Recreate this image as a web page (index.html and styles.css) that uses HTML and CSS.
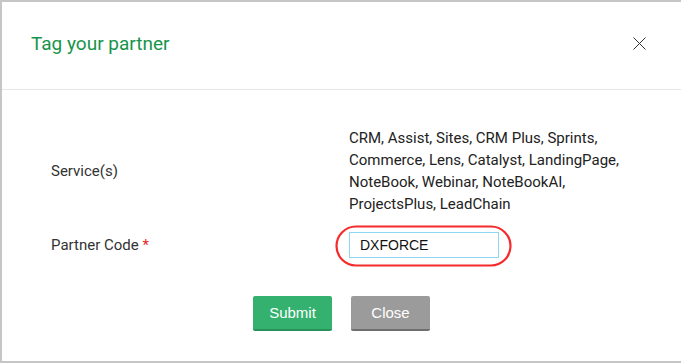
FILE: index.html
```html
<!DOCTYPE html>
<html lang="en">

<head>
    <meta charset="UTF-8">
    <meta name="viewport" content="width=device-width, initial-scale=1.0">
    <title>Tag your partner</title>
    <link rel="stylesheet" href="styles.css">
</head>

<body>
    <div class="dialog">
        <!-- header -->
        <div class="dialog-header">
            <h2>Tag your partner</h2>
            <span class="close-icon">
                <svg width="13" height="13" viewBox="0 0 13 13">
                    <path d="M0.5 0.5 L12.5 12.5 M12.5 0.5 L0.5 12.5" stroke="#333" stroke-width="1" fill="none"/>
                </svg>
            </span>
        </div>

        <div class="dialog-body">
            <!-- services -->
            <div class="form-row">
                <label>Service(s)</label>
                <div class="value">CRM, Assist, Sites, CRM Plus, Sprints,<br>Commerce, Lens, Catalyst, LandingPage,<br>NoteBook, Webinar, NoteBookAI,<br>ProjectsPlus, LeadChain</div>
            </div>

            <!-- partner code -->
            <div class="form-row code-row">
                <label for="partnerCode">Partner Code <span class="req">*</span></label>
                <div class="value">
                    <div class="input-wrap">
                        <input type="text" id="partnerCode" value="DXFORCE">
                        <svg class="mark" width="177" height="42" viewBox="0 0 177 42">
                            <rect x="1.5" y="1.5" width="174" height="39" rx="19.5" ry="19.5" stroke="#f52a2a" stroke-width="2.2" fill="none"/>
                        </svg>
                    </div>
                </div>
            </div>

            <div class="actions">
                <button class="btn btn-submit">Submit</button>
                <button class="btn btn-close">Close</button>
            </div>
        </div>
    </div>
</body>

</html>
```

FILE: styles.css
```css
body {
    margin: 0;
    font-family: Roboto, "Liberation Sans", Arial, sans-serif;
    background: #fff;
}

.dialog {
    box-sizing: border-box;
    width: 681px;
    height: 363px;
    border: 2px solid #c6c6c6;
    border-right: none;
}

.dialog-header {
    height: 87px;
    border-bottom: 1px solid #e6e6e6;
    display: flex;
    align-items: center;
    justify-content: space-between;
    padding: 0 35px 0 29px;
}

.dialog-header h2 {
    margin: 0;
    font-size: 19px;
    font-weight: normal;
    color: #16944a;
    padding-bottom: 4px;
}

.close-icon {
    display: flex;
    margin-top: -4px;
}

.dialog-body {
    padding: 37px 0 0 49px;
}

.form-row {
    display: flex;
    align-items: center;
}

.form-row label {
    width: 298px;
    font-size: 15px;
    color: #333;
}

.form-row .value {
    font-size: 15px;
    line-height: 22px;
    color: #222;
}

.req {
    color: #e8262b;
}

.code-row {
    margin-top: 17px;
}

.input-wrap {
    position: relative;
    height: 26px;
}

.input-wrap input {
    box-sizing: border-box;
    width: 150px;
    height: 26px;
    border: 1px solid #8fd6f2;
    padding: 0 10px;
    font-family: "Liberation Sans", Arial, sans-serif;
    font-size: 14px;
    color: #111;
    outline: none;
}

.mark {
    position: absolute;
    left: -14px;
    top: -7px;
    pointer-events: none;
}

.actions {
    display: flex;
    justify-content: center;
    gap: 19px;
    margin: 38px 0 0 -49px;
}

.btn {
    width: 79px;
    height: 35px;
    border: none;
    border-radius: 2px;
    color: #fff;
    font-family: "Liberation Sans", Arial, sans-serif;
    font-size: 15px;
    cursor: pointer;
}

.btn-submit {
    background-color: #34b16f;
    border-bottom: 2px solid #26915a;
}

.btn-close {
    background-color: #9b9b9b;
    border-bottom: 2px solid #6e6e6e;
}
```
